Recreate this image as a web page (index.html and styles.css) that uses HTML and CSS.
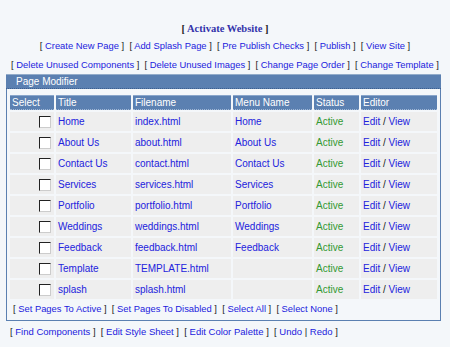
FILE: index.html
```html
<!DOCTYPE html>
<html lang="en">
<head>
    <meta charset="UTF-8">
    <title>Page Modifier</title>
    <link rel="stylesheet" href="styles.css">
</head>
<body>

<div class="site-actions">
    <div class="activate">[ <a href="#">Activate Website</a> ]</div>
    <div class="action-line">
        [ <a href="#">Create New Page</a> ] &nbsp;[ <a href="#">Add Splash Page</a> ] &nbsp;[ <a href="#">Pre Publish Checks</a> ] &nbsp;[ <a href="#">Publish</a> ] &nbsp;[ <a href="#">View Site</a> ]
    </div>
    <div class="action-line">
        [ <a href="#">Delete Unused Components</a> ] &nbsp;[ <a href="#">Delete Unused Images</a> ] &nbsp;[ <a href="#">Change Page Order</a> ] &nbsp;[ <a href="#">Change Template</a> ]
    </div>
</div>

<div class="panel">
    <div class="panel-title">Page Modifier</div>
    <div class="panel-body">
        <table class="pages">
            <colgroup>
                <col class="col-select">
                <col class="col-title">
                <col class="col-file">
                <col class="col-menu">
                <col class="col-status">
                <col class="col-editor">
            </colgroup>
            <tr>
                <th>Select</th>
                <th>Title</th>
                <th>Filename</th>
                <th>Menu Name</th>
                <th>Status</th>
                <th>Editor</th>
            </tr>
            <tr>
                <td class="sel"><span class="check"></span></td>
                <td><a href="#">Home</a></td>
                <td><a href="#">index.html</a></td>
                <td><a href="#">Home</a></td>
                <td class="active">Active</td>
                <td><a href="#">Edit</a> / <a href="#">View</a></td>
            </tr>
            <tr>
                <td class="sel"><span class="check"></span></td>
                <td><a href="#">About Us</a></td>
                <td><a href="#">about.html</a></td>
                <td><a href="#">About Us</a></td>
                <td class="active">Active</td>
                <td><a href="#">Edit</a> / <a href="#">View</a></td>
            </tr>
            <tr>
                <td class="sel"><span class="check"></span></td>
                <td><a href="#">Contact Us</a></td>
                <td><a href="#">contact.html</a></td>
                <td><a href="#">Contact Us</a></td>
                <td class="active">Active</td>
                <td><a href="#">Edit</a> / <a href="#">View</a></td>
            </tr>
            <tr>
                <td class="sel"><span class="check"></span></td>
                <td><a href="#">Services</a></td>
                <td><a href="#">services.html</a></td>
                <td><a href="#">Services</a></td>
                <td class="active">Active</td>
                <td><a href="#">Edit</a> / <a href="#">View</a></td>
            </tr>
            <tr>
                <td class="sel"><span class="check"></span></td>
                <td><a href="#">Portfolio</a></td>
                <td><a href="#">portfolio.html</a></td>
                <td><a href="#">Portfolio</a></td>
                <td class="active">Active</td>
                <td><a href="#">Edit</a> / <a href="#">View</a></td>
            </tr>
            <tr>
                <td class="sel"><span class="check"></span></td>
                <td><a href="#">Weddings</a></td>
                <td><a href="#">weddings.html</a></td>
                <td><a href="#">Weddings</a></td>
                <td class="active">Active</td>
                <td><a href="#">Edit</a> / <a href="#">View</a></td>
            </tr>
            <tr>
                <td class="sel"><span class="check"></span></td>
                <td><a href="#">Feedback</a></td>
                <td><a href="#">feedback.html</a></td>
                <td><a href="#">Feedback</a></td>
                <td class="active">Active</td>
                <td><a href="#">Edit</a> / <a href="#">View</a></td>
            </tr>
            <tr>
                <td class="sel"><span class="check"></span></td>
                <td><a href="#">Template</a></td>
                <td><a href="#">TEMPLATE.html</a></td>
                <td></td>
                <td class="active">Active</td>
                <td><a href="#">Edit</a> / <a href="#">View</a></td>
            </tr>
            <tr>
                <td class="sel"><span class="check"></span></td>
                <td><a href="#">splash</a></td>
                <td><a href="#">splash.html</a></td>
                <td></td>
                <td class="active">Active</td>
                <td><a href="#">Edit</a> / <a href="#">View</a></td>
            </tr>
        </table>
        <div class="table-actions">
            [ <a href="#">Set Pages To Active</a> ] &nbsp;[ <a href="#">Set Pages To Disabled</a> ] &nbsp;[ <a href="#">Select All</a> ] &nbsp;[ <a href="#">Select None</a> ]
        </div>
    </div>
</div>

<div class="footer-actions">
    [ <a href="#">Find Components</a> ] &nbsp;[ <a href="#">Edit Style Sheet</a> ] &nbsp;[ <a href="#">Edit Color Palette</a> ] &nbsp;[ <a href="#">Undo</a> | <a href="#">Redo</a> ]
</div>

</body>
</html>
```

FILE: styles.css
```css
body {
    margin: 0;
    padding: 22px 6px 0 6px;
    background: #f4f7fa;
    font-family: 'Liberation Sans', Arial, sans-serif;
    font-size: 10px;
    color: #222;
}
a {
    color: #2222dd;
    text-decoration: none;
}
.site-actions {
    text-align: center;
}
.activate {
    font-family: 'Liberation Serif', serif;
    font-weight: bold;
    font-size: 10.5px;
    line-height: 14px;
}
.activate a {
    color: #3333aa;
}
.action-line {
    font-size: 9.4px;
    line-height: 19px;
    white-space: nowrap;
}
.panel {
    width: 435px;
}
.panel-title {
    height: 15px;
    line-height: 14px;
    padding-left: 10px;
    color: #fff;
    background: #5b80b1;
    border-top: 1px solid #93acca;
    border-bottom: 1px dotted #3d5f8f;
    box-sizing: border-box;
}
.panel-body {
    border: 1px solid #5b80b1;
    border-top: none;
    padding: 6px 3px 4px 3px;
}
.pages {
    border-spacing: 2px;
    margin: -2px;
    width: calc(100% + 4px);
    table-layout: fixed;
}
.col-select { width: 44px; }
.col-title { width: 75px; }
.col-file { width: 98px; }
.col-menu { width: 79px; }
.col-status { width: 45px; }
.pages th {
    background: #5b80b1;
    color: #fff;
    font-weight: normal;
    text-align: left;
    height: 13px;
    padding: 0 2px;
    border-top: 1px solid #8aa6cb;
    border-bottom: 1px dotted #9fb6d4;
    line-height: 11px;
}
.pages td {
    background: #eeeeee;
    height: 19px;
    padding: 0 2px;
    white-space: nowrap;
}
.pages td.sel {
    text-align: right;
    padding-right: 3px;
}
.check {
    display: inline-block;
    width: 10px;
    height: 10px;
    background: #fff;
    border: 1px solid #ccc;
    border-top-color: #222;
    border-left-color: #222;
    vertical-align: middle;
}
.active {
    color: #339933;
}
.table-actions {
    padding: 3px 0 0 3px;
    font-size: 9.4px;
    line-height: 14px;
}
.footer-actions {
    padding: 4px 0 0 4px;
    font-size: 9.5px;
    line-height: 14px;
}
```
